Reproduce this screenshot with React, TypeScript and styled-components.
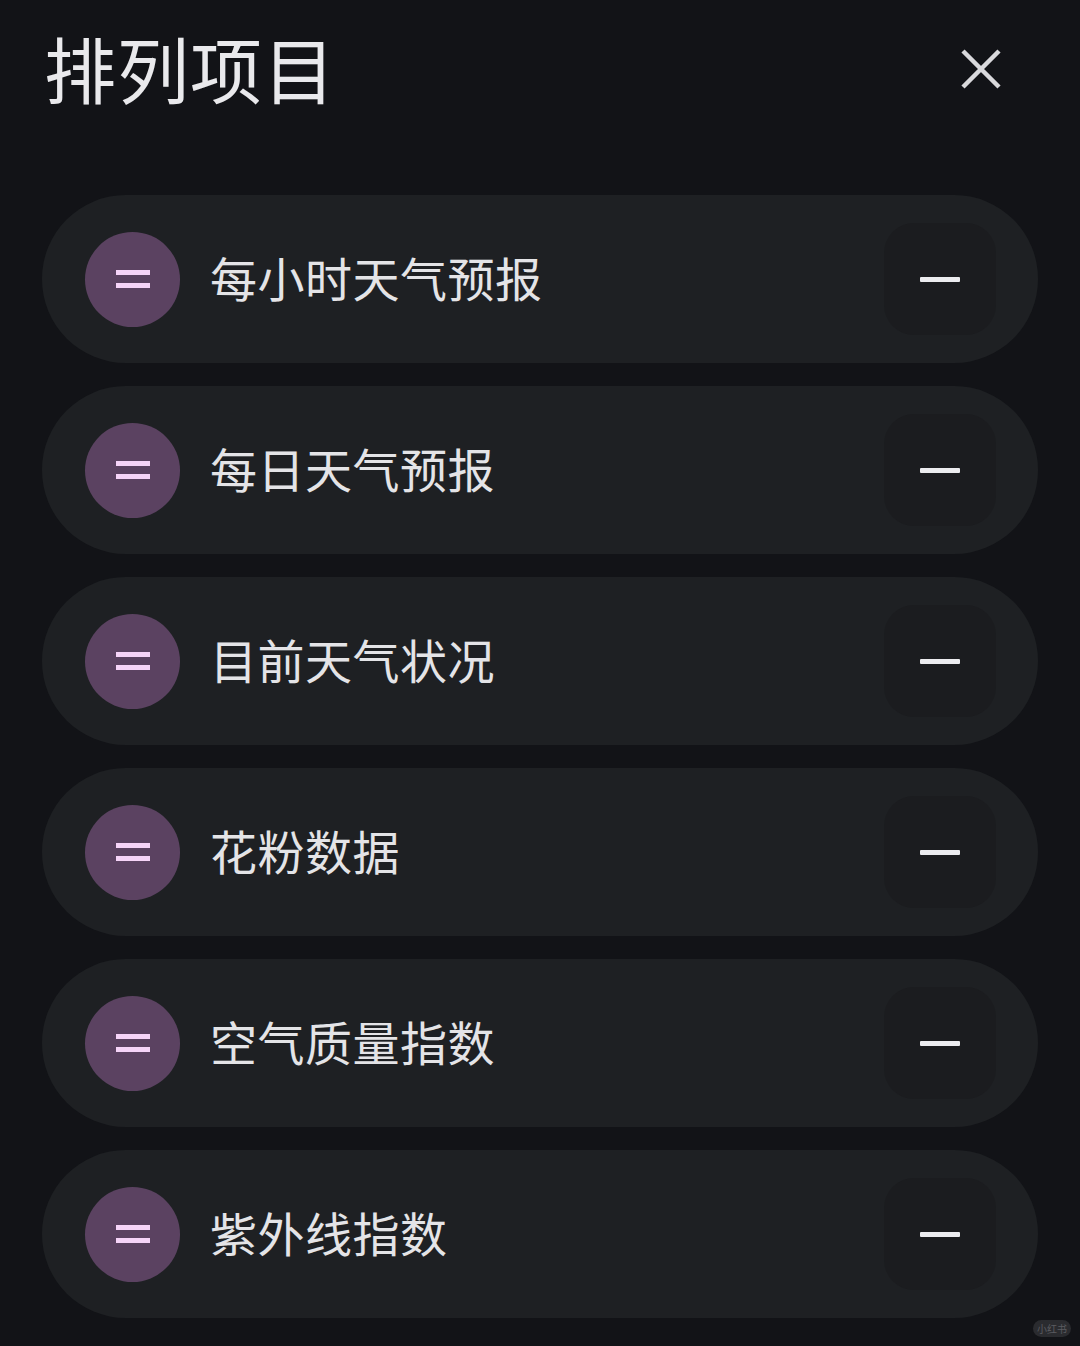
import React from "react";
import styled, { createGlobalStyle } from "styled-components";

const Global = createGlobalStyle`
  html, body { margin: 0; padding: 0; background: #121317; }
  body { font-family: "Noto Sans CJK SC", "Noto Sans", sans-serif; }
`;

const Page = styled.div`
  width: 1080px;
  height: 1346px;
  background: #121317;
  box-sizing: border-box;
  padding: 0 42px 0 42px;
  position: relative;
  overflow: hidden;
`;

const Header = styled.div`
  display: flex;
  align-items: center;
  justify-content: space-between;
  height: 134px;
  padding: 0 0 0 2px;
  margin-bottom: 61px;
`;

const Title = styled.h1`
  margin: 0;
  font-size: 72px;
  font-weight: 400;
  color: #e9e9ec;
  letter-spacing: 1px;
  line-height: 1;
`;

const CloseButton = styled.button`
  width: 60px;
  height: 60px;
  margin-right: 27px;
  margin-top: 4px;
  background: none;
  border: none;
  padding: 0;
  display: flex;
  align-items: center;
  justify-content: center;
`;

const List = styled.div`
  display: flex;
  flex-direction: column;
  gap: 23px;
`;

const Row = styled.div`
  height: 168px;
  border-radius: 84px;
  background: #1e2023;
  display: flex;
  align-items: center;
  padding: 0 42px 0 43px;
`;

const Handle = styled.div`
  width: 95px;
  height: 95px;
  border-radius: 50%;
  background: #5b4261;
  display: flex;
  flex-direction: column;
  align-items: center;
  justify-content: center;
  gap: 8px;
  flex-shrink: 0;
`;

const Bar = styled.span`
  display: block;
  width: 34px;
  height: 5px;
  background: #f6d4f8;
`;

const Label = styled.span`
  flex: 1;
  margin-left: 30px;
  margin-top: -5px;
  font-size: 47px;
  color: #e4e4e7;
  letter-spacing: 0.5px;
  line-height: 1;
`;

const RemoveButton = styled.button`
  width: 112px;
  height: 112px;
  border-radius: 30px;
  background: #1b1c1f;
  border: none;
  padding: 0;
  display: flex;
  align-items: center;
  justify-content: center;
`;

const Minus = styled.span`
  display: block;
  width: 40px;
  height: 5px;
  background: #ececef;
  border-radius: 1px;
`;

const Watermark = styled.div`
  position: absolute;
  right: 9px;
  bottom: 9px;
  height: 17px;
  padding: 0 4px;
  border-radius: 9px;
  background: #2a2b2f;
  color: #5a5b60;
  font-size: 10px;
  line-height: 17px;
`;

const items = [
  "每小时天气预报",
  "每日天气预报",
  "目前天气状况",
  "花粉数据",
  "空气质量指数",
  "紫外线指数",
];

export default function App() {
  return (
    <Page>
      <Global />
      <Header>
        <Title>排列项目</Title>
        <CloseButton aria-label="关闭">
          <svg width="40" height="40" viewBox="0 0 40 40">
            <path d="M2 2 L38 38 M38 2 L2 38" stroke="#d9d9dc" strokeWidth="4.5" strokeLinecap="butt" />
          </svg>
        </CloseButton>
      </Header>
      <List>
        {items.map((t) => (
          <Row key={t}>
            <Handle>
              <Bar />
              <Bar />
            </Handle>
            <Label>{t}</Label>
            <RemoveButton aria-label="移除">
              <Minus />
            </RemoveButton>
          </Row>
        ))}
      </List>
      <Watermark>小红书</Watermark>
    </Page>
  );
}
